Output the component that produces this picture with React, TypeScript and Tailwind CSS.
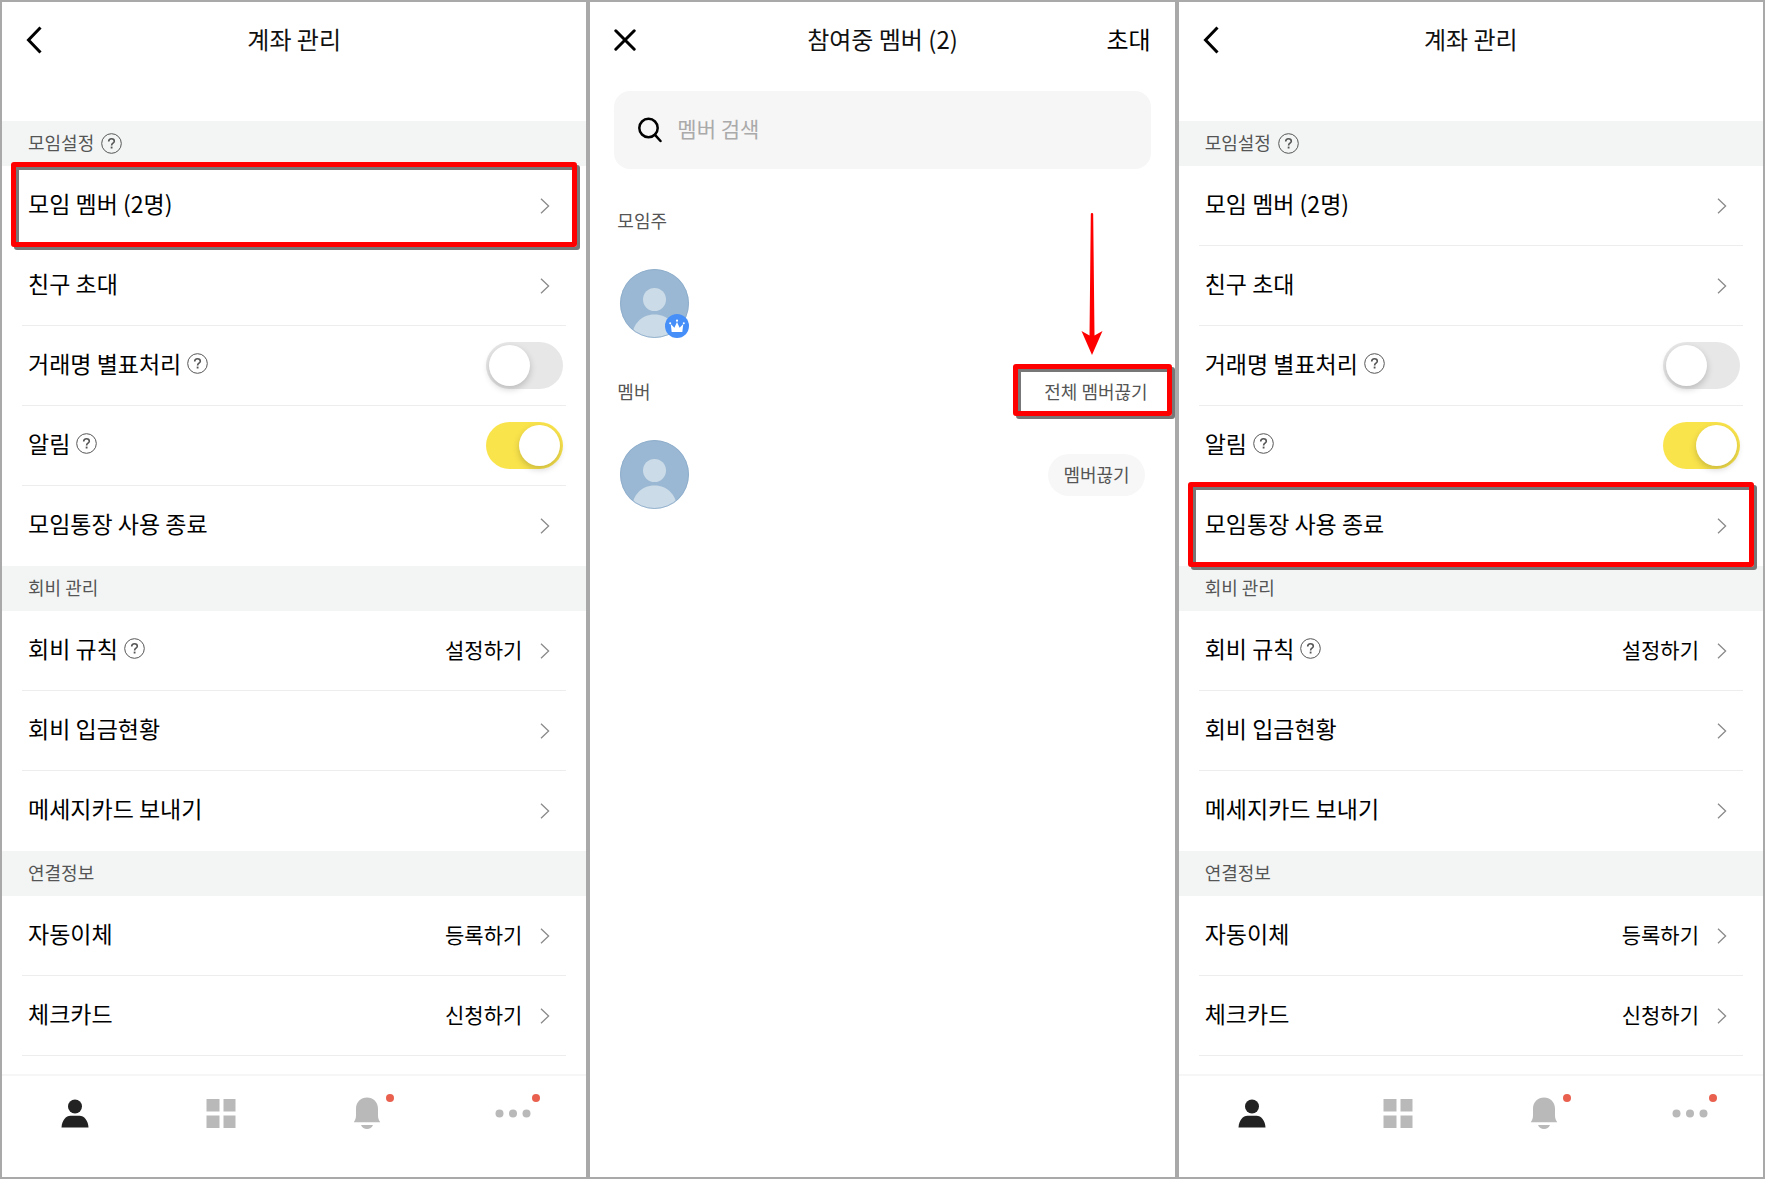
import { useId, useState } from "react";
import type { ReactNode } from "react";

type RowData = {
  label: string;
  help?: boolean;
  value?: string;
  toggle?: boolean;
};

type SectionData = { title: string; help?: boolean; more?: boolean; rows: RowData[] };

const sections: SectionData[] = [
  {
    title: "모임설정",
    help: true,
    rows: [
      { label: "모임 멤버 (2명)" },
      { label: "친구 초대" },
      { label: "거래명 별표처리", help: true, toggle: false },
      { label: "알림", help: true, toggle: true },
      { label: "모임통장 사용 종료" },
    ],
  },
  {
    title: "회비 관리",
    rows: [
      { label: "회비 규칙", help: true, value: "설정하기" },
      { label: "회비 입금현황" },
      { label: "메세지카드 보내기" },
    ],
  },
  {
    title: "연결정보",
    more: true,
    rows: [
      { label: "자동이체", value: "등록하기" },
      { label: "체크카드", value: "신청하기" },
    ],
  },
];

function HelpButton({ topic }: { topic: string }) {
  return (
    <button type="button" aria-label={`${topic} 도움말`} className="shrink-0 text-[#555]">
      <svg width="21" height="21" viewBox="0 0 21 21" fill="none" stroke="currentColor">
        <circle cx="10.5" cy="10.5" r="9.8" strokeWidth="1" />
        <path d="M7.7 8.4c0-1.7 1.2-2.7 2.8-2.7s2.8 1 2.8 2.5c0 2-2.7 2-2.7 4.2" strokeWidth="1.6" />
        <path d="M10.6 13.6v1.9" strokeWidth="1.8" />
      </svg>
    </button>
  );
}

function Chevron() {
  return (
    <svg width="10" height="16" viewBox="0 0 10 16" fill="none" stroke="#8a8a8a" strokeWidth="1.3" aria-hidden="true">
      <path d="M1 0.7 8.6 8 1 15.3" />
    </svg>
  );
}

/* Red marker frame drawn over the element that it surrounds. */
function Marker({ className }: { className: string }) {
  return (
    <span
      aria-hidden="true"
      className={`pointer-events-none absolute z-10 rounded-[3px] border-[5px] border-[#fe0000] shadow-[3px_3px_0_#777,inset_3px_3px_0_#777] ${className}`}
    />
  );
}

function Row({ row, marked, divider }: { row: RowData; marked: boolean; divider: boolean }) {
  const id = useId();
  const [on, setOn] = useState(row.toggle === true);
  const end = (
    <span className="flex items-center gap-[18px]">
      {row.value && <span className="pb-1 text-[21px] leading-8">{row.value}</span>}
      <Chevron />
    </span>
  );

  let content: ReactNode;
  if (row.toggle !== undefined) {
    content = (
      <>
        <span className="flex items-center gap-1.5 pb-1">
          <label htmlFor={id} className="pb-0.5">
            {row.label}
          </label>
          <HelpButton topic={row.label} />
        </span>
        <input
          id={id}
          type="checkbox"
          role="switch"
          checked={on}
          onChange={(e) => setOn(e.target.checked)}
          className="ml-auto h-[47px] w-[77px] cursor-pointer appearance-none rounded-full bg-[#e7e7e7] p-[3px] before:block before:size-[41px] before:rounded-full before:bg-white before:shadow-[0_3px_7px_rgba(0,0,0,0.2)] checked:bg-[#fae44c] checked:before:ml-[30px]"
        />
      </>
    );
  } else if (row.help) {
    content = (
      <>
        <span className="flex items-center gap-1.5 pb-1">
          <span id={id} className="pb-0.5">
            {row.label}
          </span>
          <HelpButton topic={row.label} />
        </span>
        <button type="button" aria-describedby={id} className="mr-[13px] flex flex-1 justify-end">
          {end}
        </button>
      </>
    );
  } else {
    content = (
      <button type="button" className="mr-[13px] flex h-full flex-1 items-center justify-between text-left">
        <span className="pb-1.5">{row.label}</span>
        {end}
      </button>
    );
  }

  return (
    <li
      className={`relative mx-5 flex h-20 items-center border-b pr-[3px] pl-1.5 text-[23px] leading-8 text-black ${
        divider ? "border-[#ededed]" : "border-transparent"
      }`}
    >
      {content}
      {marked && <Marker className="-inset-x-[11px] -top-1 -bottom-0.5" />}
    </li>
  );
}

function NavIcon({ name }: { name: string }) {
  if (name === "홈")
    return (
      <svg width="28" height="32" viewBox="0 0 28 32" fill="#222">
        <ellipse cx="14" cy="9.5" rx="7" ry="7" />
        <path d="M.5 30.5C.8 23.5 5 18.8 9.5 18.8h9c4.5 0 8.7 4.7 9 11.700z" />
      </svg>
    );
  if (name === "전체")
    return (
      <svg width="30" height="32" viewBox="0 0 30 32" fill="#b9b9b9">
        <path d="M.5 2h13v12.5H.5zM17.5 2h12v12.5h-12zM.5 18.5h13v12.5H.5zM17.5 18.5h12v12.5h-12z" />
      </svg>
    );
  if (name === "알림")
    return (
      <svg width="28" height="32" viewBox="0 0 28 32" fill="#b9b9b9">
        <path d="M.8 25.2c1.5-2.5 2.2-4 2.2-7V11.5C3 5 8 .5 14 .5S25 5 25 11.5v6.7c0 3 .7 4.5 2.2 7z" />
        <path d="M8 28h12c-1 2.5-3.3 4-6 4s-5-1.5-6-4z" />
      </svg>
    );
  return (
    <svg width="36" height="32" viewBox="0 0 36 32" fill="#b9b9b9">
      <circle cx="4.5" cy="16.5" r="4" />
      <circle cx="18" cy="16.5" r="4" />
      <circle cx="31.5" cy="16.5" r="4" />
    </svg>
  );
}

function BottomNav() {
  const items = [
    { name: "홈", dot: false },
    { name: "전체", dot: false },
    { name: "알림", dot: true },
    { name: "더보기", dot: true },
  ];
  return (
    <nav className="mt-auto grid grid-cols-4 border-t-2 border-[#f6f6f6] pt-[21px] pb-12">
      {items.map((item) => (
        <button key={item.name} type="button" aria-label={item.name} className="flex justify-center">
          <span className="relative flex w-[54px] justify-center">
            <NavIcon name={item.name} />
            {item.dot && <span className="absolute -top-[3px] right-0 size-2 rounded-full bg-[#e9604f]" />}
          </span>
        </button>
      ))}
    </nav>
  );
}

function AccountScreen({ marked }: { marked: string }) {
  return (
    <section className="flex flex-col border-2 border-[#a9a9a9] bg-white">
      <header className="mb-[43px] grid h-[76px] grid-cols-[1fr_auto_1fr] items-center px-6">
        <button type="button" aria-label="뒤로" className="justify-self-start">
          <svg width="16" height="28" viewBox="0 0 16 28" fill="none" stroke="#000" strokeWidth="3">
            <path d="M14.5 1.5 2.5 14l12 12.5" />
          </svg>
        </button>
        <h1 className="pb-0.5 text-2xl leading-8 text-[#111]">계좌 관리</h1>
      </header>
      {sections.map((section) => (
        <div key={section.title}>
          <h2 className="flex h-[45px] items-center gap-[7px] bg-[#f3f5f5] px-[26px] text-lg leading-6 text-[#555]">
            <span className="pb-1">{section.title}</span>
            {section.help && <HelpButton topic={section.title} />}
          </h2>
          <ul>
            {section.rows.map((row, i) => (
              <Row
                key={row.label}
                row={row}
                marked={row.label === marked}
                divider={section.more === true || i < section.rows.length - 1}
              />
            ))}
          </ul>
        </div>
      ))}
      <BottomNav />
    </section>
  );
}

function Avatar({ owner }: { owner?: boolean }) {
  return (
    <span className="relative block size-[69px]">
      <span className="block size-full overflow-hidden rounded-full bg-[#9ab8d3]">
        <svg width="69" height="69" viewBox="0 0 69 69" fill="#ccdbe8">
          <circle cx="34.5" cy="30.5" r="11.5" />
          <path d="M12 69c0-13 9-23.5 22.5-23.5S57 56 57 69z" />
          <circle cx="34.5" cy="34.5" r="34" fill="none" stroke="#8faecb" strokeWidth="1" />
        </svg>
      </span>
      {owner && (
        <span className="absolute right-0 bottom-0 flex size-6 items-center justify-center rounded-full bg-[#478ff8]">
          <svg width="16" height="14" viewBox="0 0 16 14" fill="#fff">
            <path d="M2.7 13 1.7 5l3.7 3.7L8 3l2.6 5.7L14.3 5l-1 8z" />
            <circle cx="8" cy="1.7" r="1.1" />
            <circle cx="1.2" cy="4.3" r="1" />
            <circle cx="14.8" cy="4.3" r="1" />
          </svg>
        </span>
      )}
    </span>
  );
}

function MembersScreen() {
  return (
    <section className="flex flex-col border-2 border-[#a9a9a9] bg-white px-6">
      <header className="grid h-[76px] grid-cols-[1fr_auto_1fr] items-center">
        <button type="button" aria-label="닫기" className="justify-self-start">
          <svg width="22" height="22" viewBox="0 0 22 22" fill="none" stroke="#000" strokeWidth="3" strokeLinecap="round">
            <path d="M1.8 1.8 20.2 20.2M20.2 1.8 1.8 20.2" />
          </svg>
        </button>
        <h1 className="pb-0.5 text-2xl leading-8 text-[#111]">참여중 멤버 (2)</h1>
        <button type="button" className="justify-self-end pb-0.5 text-2xl leading-8 text-black">
          초대
        </button>
      </header>

      <div className="mt-[13px] flex h-[78px] items-center gap-[15px] rounded-2xl bg-[#f6f6f6] px-6">
        <svg width="24" height="26" viewBox="0 0 24 26" fill="none" stroke="#000" strokeWidth="2.5" strokeLinecap="round" aria-hidden="true">
          <circle cx="10.5" cy="11" r="9.2" />
          <path d="M17 17.8 22.5 24" />
        </svg>
        <input
          type="text"
          aria-label="멤버 검색"
          placeholder="멤버 검색"
          className="min-w-0 flex-1 bg-transparent pb-1 text-[21px] leading-8 text-black outline-none placeholder:text-[#aaa]"
        />
      </div>

      <h2 className="mt-[39px] px-[3px] text-lg leading-6 text-[#555]">모임주</h2>
      <div className="mt-[37px] px-1.5">
        <Avatar owner />
      </div>

      <div className="mt-[41px] flex items-center justify-between px-[3px] text-lg leading-6 text-[#555]">
        <h2>멤버</h2>
        <div className="relative">
          <button type="button" className="block">
            전체 멤버끊기
          </button>
          <Marker className="-top-[15px] -right-[24px] -bottom-[13px] -left-[31px]" />
          <svg
            width="22"
            height="142"
            viewBox="0 0 22 142"
            fill="#fe0000"
            aria-hidden="true"
            className="absolute right-[45px] bottom-full mb-6"
          >
            <path d="M11 0c.8 0 1.2.5 1.2 1.5L13.5 122.5 21.5 118 11 142 .5 118l8 4.500L9.8 1.5C9.8.5 10.2 0 11 0z" />
          </svg>
        </div>
      </div>
      <div className="mt-[37px] flex items-center justify-between px-1.5">
        <Avatar />
        <button type="button" className="h-[42px] rounded-full bg-[#f7f7f7] px-[15px] pb-0.5 text-lg leading-6 text-[#555]">
          멤버끊기
        </button>
      </div>
    </section>
  );
}

export default function App() {
  return (
    <main className="grid min-h-screen grid-cols-3 bg-white font-['Noto_Sans_CJK_KR',sans-serif]">
      <AccountScreen marked="모임 멤버 (2명)" />
      <MembersScreen />
      <AccountScreen marked="모임통장 사용 종료" />
    </main>
  );
}
